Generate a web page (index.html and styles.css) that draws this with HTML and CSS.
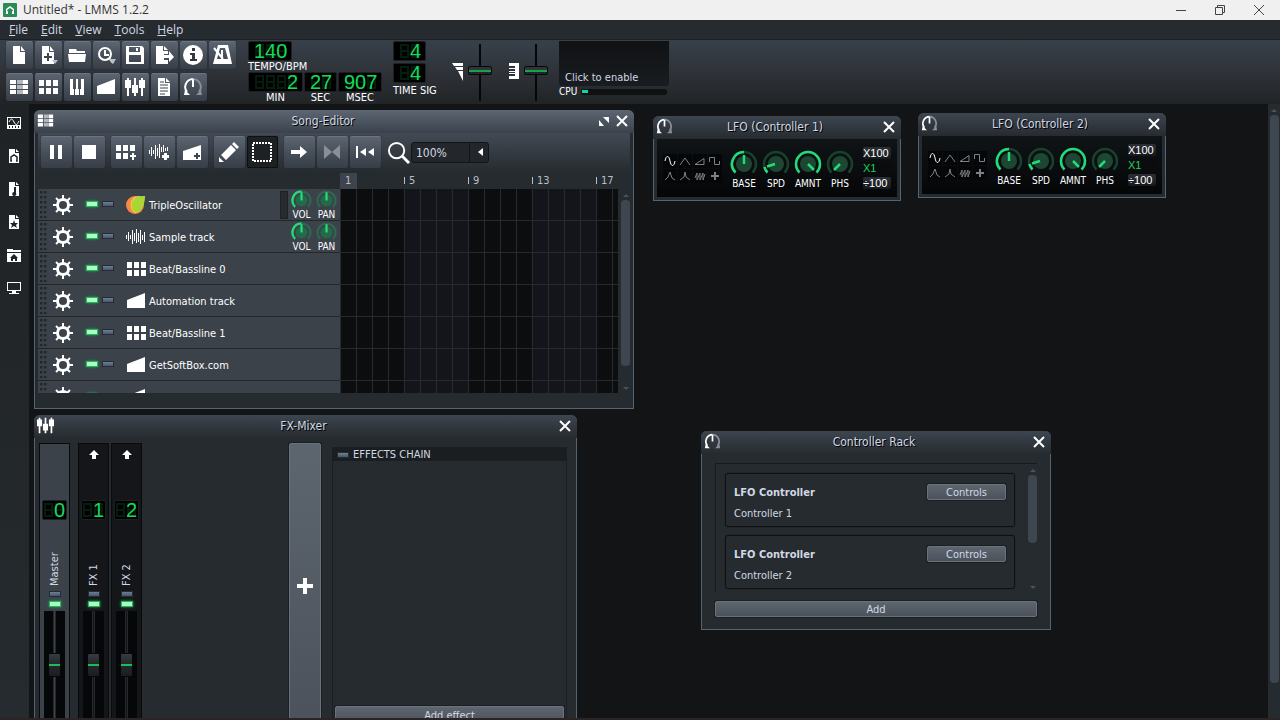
FILE: index.html
```html
<!DOCTYPE html>
<html lang="en">
<head>
<meta charset="utf-8">
<meta name="viewport" content="width=device-width, initial-scale=1">
<title>Untitled* - LMMS 1.2.2</title>
<link rel="stylesheet" href="styles.css">
</head>
<body>

<!-- icon set -->
<svg class="sprite" width="0" height="0">
  <symbol id="i-file" viewBox="0 0 20 20"><path d="M4 1h7v6h5v12H4zM12 1l4 5h-4z"/></symbol>
  <symbol id="i-new" viewBox="0 0 20 20"><path d="M4 1h7v6h5v12H4zM12 1l4 5h-4z"/><path d="M10 8v8M6 12h8" stroke="#3d444e" stroke-width="2"/><path d="M14 15h6l-3 4z" fill="#b8bfc8"/></symbol>
  <symbol id="i-open" viewBox="0 0 20 20"><path d="M2 4h7l1 2h8v2H2zM1 9h18l-1 8H2z"/></symbol>
  <symbol id="i-recent" viewBox="0 0 20 20"><circle cx="9" cy="9" r="6" fill="none" stroke="#fff" stroke-width="2"/><path d="M9 5v5h4M13 13l4 5" fill="none" stroke="#fff" stroke-width="2"/><path d="M13 14h7l-3 5z" fill="#b8bfc8"/></symbol>
  <symbol id="i-save" viewBox="0 0 20 20"><path fill-rule="evenodd" d="M1 1h16l2 2v16H1zM4 2v5h11V2zM4 10v7h12v-7z"/><path d="M11 3h2v3h-2z"/></symbol>
  <symbol id="i-export" viewBox="0 0 20 20"><path d="M2 1h7v5h5v3h-4v6h4v4H2zM10 1l4 4h-4z"/><path d="M9 10h6V6l5 6-5 5v-4H9z"/></symbol>
  <symbol id="i-info" viewBox="0 0 20 20"><circle cx="10" cy="10" r="10"/><path d="M9 3h3v3H9zM7 8h5v6h2v2H7v-2h2v-4H7z" fill="#333a43"/></symbol>
  <symbol id="i-metro" viewBox="0 0 20 20"><path fill-rule="evenodd" d="M6 0h10l4 19H1zM8 3L5 14h11L13 3z"/><path d="M2 3l9 11M10 5v9" stroke="#fff" stroke-width="2" fill="none"/></symbol>
  <symbol id="i-song" viewBox="0 0 20 20"><path d="M1 3h6v4H1zM14 3h5v4h-5zM1 8h6v4H1zM14 8h5v4h-5zM1 13h6v4H1zM14 13h5v4h-5z"/><path d="M8 3h6v4H8zM8 8h6v4H8zM8 13h6v4H8z" fill="#b3b6bd"/></symbol>
  <symbol id="i-bb" viewBox="0 0 20 20"><path d="M1 3h5v6H1zM8 3h5v6H8zM15 3h5v6h-5zM1 11h5v6H1zM8 11h5v6H8zM15 11h5v6h-5z"/></symbol>
  <symbol id="i-piano" viewBox="0 0 20 20"><path d="M3 2h3v10h1v6H3zM8 12h1V2h2v10h1v6H8zM14 2h3v16h-4v-6h1z"/></symbol>
  <symbol id="i-auto" viewBox="0 0 20 20"><path d="M1 9L19 2v15H1z"/></symbol>
  <symbol id="i-mixer" viewBox="0 0 20 20"><path d="M3 1v18M10 1v18M17 1v18" stroke="#fff" stroke-width="2"/><path d="M0 3h6v8H0zM7 8h6v8H7zM14 3h6v8h-6z"/></symbol>
  <symbol id="i-notes" viewBox="0 0 20 20"><path d="M4 1h7v5h5v13H4zM12 1l4 4h-4z"/><path d="M6 5h4M6 8h8M6 11h8M6 14h8M6 17h5" stroke="#3d444e"/></symbol>
  <symbol id="i-knob" viewBox="0 0 20 20"><path d="M10 2a8 8 0 0 0-6 13" fill="none" stroke="#fff" stroke-width="2"/><path d="M10 2a8 8 0 0 1 6 13" fill="none" stroke="#8a8f98" stroke-width="2"/><path d="M10 2v8" stroke="#fff" stroke-width="2"/><path d="M1 18l1-5 5 5z"/><path d="M19 18l-1-5-5 5z" fill="#8a8f98"/></symbol>
  <symbol id="i-gear" viewBox="0 0 20 20"><circle cx="10" cy="10" r="5.5" fill="none" stroke="#fff" stroke-width="3"/><path d="M10 0v4M10 16v4M0 10h4M16 10h4M3 3l3 3M14 14l3 3M17 3l-3 3M6 14l-3 3" stroke="#fff" stroke-width="2"/></symbol>
  <symbol id="i-wave" viewBox="0 0 20 20"><path d="M.5 8v4M2.500 5v9M4.500 8v4M6.500 3v14M8.500 6v8M10.500 2v14M12.500 6v9M14.500 3v14M16.500 8v5M18.500 5v10" stroke="#fff"/></symbol>
  <symbol id="i-close" viewBox="0 0 12 12"><path d="M1 1l10 10M11 1L1 11" stroke="#fff" stroke-width="2" fill="none"/></symbol>
  <symbol id="i-up" viewBox="0 0 12 12"><path d="M6 1l5 5H8v4H4V6H1z"/></symbol>
  <symbol id="i-slice" viewBox="0 0 20 20"><circle cx="9" cy="10" r="9" fill="#f58a45"/><path d="M14 1C3 0 2 14 9 18c5-1 8-8 5-17z" fill="#fbc94a"/><path d="M19 1C9 0 4 6 6 13c1 3 3 4 6 5 4-3 7-9 7-17z" fill="#a9d634"/></symbol>

  <!-- knob bodies -->
  <symbol id="k-body" viewBox="0 0 28 28"><circle cx="14" cy="14" r="8" fill="#1d4733"/><path d="M5.500 22.500A12 12 0 1 1 22.500 22.500" fill="none" stroke="#17432c" stroke-width="2.500"/></symbol>
  <symbol id="k-small" viewBox="0 0 28 28"><circle cx="14" cy="14" r="8" fill="#24694a"/><path d="M5.500 22.500A12 12 0 1 1 22.500 22.500" fill="none" stroke="#2c6950" stroke-width="3"/></symbol>
  <symbol id="k-vol" viewBox="0 0 28 28"><use href="#k-small"/><path d="M5.500 22.500A12 12 0 0 1 14 2" fill="none" stroke="#22dc78" stroke-width="3"/><path d="M14 3v11" stroke="#22dc78" stroke-width="3"/></symbol>
  <symbol id="k-pan" viewBox="0 0 28 28"><use href="#k-small"/><path d="M14 3v11" stroke="#22dc78" stroke-width="3"/></symbol>
  <symbol id="k-base" viewBox="0 0 28 28"><use href="#k-body"/><path d="M5.500 22.500A12 12 0 0 1 14 2M14 5v9" fill="none" stroke="#22dc78" stroke-width="2.500"/></symbol>
  <symbol id="k-spd" viewBox="0 0 28 28"><use href="#k-body"/><path d="M5.500 22.500A12 12 0 0 1 2.400 17M5 16.500L13 14" fill="none" stroke="#22dc78" stroke-width="2.500"/></symbol>
  <symbol id="k-amnt" viewBox="0 0 28 28"><use href="#k-body"/><path d="M5.500 22.500A12 12 0 1 1 22.500 22.500M14 14l6 6" fill="none" stroke="#22dc78" stroke-width="2.500"/></symbol>
  <symbol id="k-phs" viewBox="0 0 28 28"><use href="#k-body"/><path d="M14 14l-6 6" fill="none" stroke="#22dc78" stroke-width="2.500"/></symbol>

  <!-- lfo waveforms -->
  <symbol id="w-sin" viewBox="0 0 14 14"><path d="M2 7C3 1 6 1 7 7s4 6 5 0"/></symbol>
  <symbol id="w-tri" viewBox="0 0 14 14"><path d="M2 11l5-7 5 7"/></symbol>
  <symbol id="w-saw" viewBox="0 0 14 14"><path d="M2 10.500l9-6v6z"/></symbol>
  <symbol id="w-sqr" viewBox="0 0 14 14"><path d="M1.500 8V3.500h5v7h5V7"/></symbol>
  <symbol id="w-moog" viewBox="0 0 14 14"><path d="M2 11l3-3 2-5 2 6 3 2"/></symbol>
  <symbol id="w-exp" viewBox="0 0 14 14"><path d="M2 11l4-3 1-5 1 5 4 3"/></symbol>
  <symbol id="w-noise" viewBox="0 0 14 14"><path d="M2 9l2-5v7l3-7v7l3-7v7l2-6"/></symbol>
  <symbol id="w-user" viewBox="0 0 14 14"><path d="M7 3v8M3 7h8" stroke-width="2"/></symbol>
</svg>

<header class="titlebar">
  <svg class="logo" viewBox="0 0 14 14"><rect width="14" height="14" rx="1" fill="#2b8a57"/><path d="M3 11V6l4-3 4 3v5H9V9l1-2-3-2-3 2 1 2v2z" fill="#fff"/></svg>
  <span class="titlebar-text">Untitled* - LMMS 1.2.2</span>
  <button class="sys" aria-label="Minimize"><svg viewBox="0 0 12 12"><path d="M1 6.500h10"/></svg></button>
  <button class="sys" aria-label="Restore"><svg viewBox="0 0 12 12"><path d="M1.500 3.500h7v7h-7zM3.500 3V1.500h7v7H9"/></svg></button>
  <button class="sys" aria-label="Close"><svg viewBox="0 0 12 12"><path d="M1 1l10 10M11 1L1 11"/></svg></button>
</header>

<nav class="menu">
  <a href="#"><u>F</u>ile</a>
  <a href="#"><u>E</u>dit</a>
  <a href="#"><u>V</u>iew</a>
  <a href="#"><u>T</u>ools</a>
  <a href="#"><u>H</u>elp</a>
</nav>

<div class="toolbar">
  <div class="tool-grid">
    <button class="tool" aria-label="New project"><svg><use href="#i-file"/></svg></button>
    <button class="tool" aria-label="New from template"><svg><use href="#i-new"/></svg></button>
    <button class="tool" aria-label="Open"><svg><use href="#i-open"/></svg></button>
    <button class="tool" aria-label="Recent projects"><svg><use href="#i-recent"/></svg></button>
    <button class="tool" aria-label="Save"><svg><use href="#i-save"/></svg></button>
    <button class="tool" aria-label="Export"><svg><use href="#i-export"/></svg></button>
    <button class="tool" aria-label="Info"><svg><use href="#i-info"/></svg></button>
    <button class="tool" aria-label="Metronome"><svg><use href="#i-metro"/></svg></button>
    <button class="tool" aria-label="Song-Editor"><svg><use href="#i-song"/></svg></button>
    <button class="tool" aria-label="Beat+Bassline Editor"><svg><use href="#i-bb"/></svg></button>
    <button class="tool" aria-label="Piano Roll"><svg><use href="#i-piano"/></svg></button>
    <button class="tool" aria-label="Automation Editor"><svg><use href="#i-auto"/></svg></button>
    <button class="tool" aria-label="FX-Mixer"><svg><use href="#i-mixer"/></svg></button>
    <button class="tool" aria-label="Project notes"><svg><use href="#i-notes"/></svg></button>
    <button class="tool" aria-label="Controller Rack"><svg><use href="#i-knob"/></svg></button>
  </div>

  <div class="clock">
    <div class="tempo"><span class="lcd lcd3">140</span><span class="cap">TEMPO/BPM</span></div>
    <div class="times">
      <div><span class="lcd lcd4">2</span><span class="cap mid">MIN</span></div>
      <div><span class="lcd lcd2">27</span><span class="cap mid">SEC</span></div>
      <div><span class="lcd lcd3">907</span><span class="cap mid">MSEC</span></div>
    </div>
  </div>

  <div class="timesig">
    <span class="lcd lcd2">4</span>
    <span class="lcd lcd2">4</span>
    <span class="cap">TIME SIG</span>
  </div>

  <div class="master">
    <svg width="12" height="18" viewBox="0 0 12 18"><path d="M0 0h11v3H2zM3 4h8v3H5zM6 8h5v10z"/></svg>
    <input class="vfader" type="range" min="0" max="100" value="54" aria-label="Master volume">
    <svg width="12" height="18" viewBox="0 0 12 18"><path d="M1 0h10v3H1zM7 3h4v10H7zM1 5h6v1H1zM1 8h6v1H1zM1 10h6v1H1zM1 13h10v3H1z"/></svg>
    <input class="vfader" type="range" min="0" max="100" value="54" aria-label="Master pitch">
  </div>

  <div class="cpu">
    <button class="scope">Click to enable</button>
    <div class="cpu-row"><span>CPU</span><div class="cpu-bar"><i></i></div></div>
  </div>
</div>

<div class="main">
  <aside class="sidebar">
    <button aria-label="Instrument plugins"><svg viewBox="0 0 14 14"><path fill-rule="evenodd" d="M0 1h14v12H0zM1 2v7h12V2zM2 10v2h1v-2zM5 10v2h1v-2zM8 10v2h1v-2zM11 10v2h1v-2z"/><path d="M2 6c2-4 3-4 5 0s3 3 5-1" fill="none" stroke="#fff"/></svg></button>
    <button aria-label="My projects"><svg viewBox="0 0 14 14"><path d="M2 0h6v4h4v10H2zM9 0l3 3H9z"/><path d="M5 12H4V8l3-2 3 2v4H9" fill="none" stroke="#1f2427" stroke-width="1.500"/></svg></button>
    <button aria-label="My samples"><svg viewBox="0 0 14 14"><path d="M2 0h6v4h4v10H2zM9 0l3 3H9z"/><path d="M7 5h2v6a2 2 0 1 1-2-1z" fill="#1f2427"/></svg></button>
    <button aria-label="My presets"><svg viewBox="0 0 14 14"><path d="M2 0h6v4h4v10H2zM9 0l3 3H9z"/><path d="M7 5l1 3h3l-2 2 1 3-3-2-3 2 1-3-2-2h3z" fill="#1f2427"/></svg></button>
    <button aria-label="My home"><svg viewBox="0 0 14 14"><path d="M0 1h6v1h8v2H0zM0 5h14v9H0z"/><path d="M7 6l4 4h-1v3H8v-2H6v2H4v-3H3z" fill="#1f2427"/></svg></button>
    <button aria-label="My computer"><svg viewBox="0 0 14 14"><path fill-rule="evenodd" d="M0 1h14v9H0zM1 2v7h12V2zM5 10h4v2H5zM2 12h10v1H2z"/></svg></button>
  </aside>

  <main class="workspace">

    <section class="win song active">
      <div class="win-title">
        <svg class="win-icon"><use href="#i-song"/></svg>
        <h2>Song-Editor</h2>
        <button aria-label="Maximize"><svg viewBox="0 0 12 12"><path d="M5 2h6v6zM1 5l5 6H1z"/></svg></button>
        <button aria-label="Close"><svg><use href="#i-close"/></svg></button>
      </div>
      <div class="song-tools">
        <div class="group">
          <button class="tool" aria-label="Pause"><svg viewBox="0 0 20 20"><path d="M4 3h4v14H4zM12 3h4v14h-4z"/></svg></button>
          <button class="tool" aria-label="Stop"><svg viewBox="0 0 20 20"><path d="M3 3h14v14H3z"/></svg></button>
        </div>
        <div class="group">
          <button class="tool" aria-label="Add beat/bassline"><svg viewBox="0 0 20 20"><path d="M0 3h5v6H0zM7 3h5v6H7zM14 3h5v6h-5zM0 11h5v6H0zM7 11h5v6H7zM16 11h2v2h2v2h-2v3h-2v-3h-2v-2h2z"/></svg></button>
          <button class="tool" aria-label="Add sample track"><svg viewBox="0 0 20 20"><path d="M.5 8v4M2.500 5v9M4.500 8v4M6.500 3v14M8.500 6v8M10.500 2v14M12.500 5v5M14.500 3v7M16.500 6v3M18.500 5v4" stroke="#fff"/><path d="M15 11h3v2h2v3h-2v2h-3v-2h-2v-3h2z"/></svg></button>
          <button class="tool" aria-label="Add automation track"><svg viewBox="0 0 20 20"><path d="M1 9L19 3v15H1z"/><path d="M15 11v6M12 14h6" stroke="#3d444e" stroke-width="2"/></svg></button>
        </div>
        <div class="group">
          <button class="tool" aria-label="Draw mode"><svg viewBox="0 0 20 20"><path d="M2 13L12 3l5 5L7 18zM13 2l2-2 5 5-2 2zM0 15l5 5H0z"/></svg></button>
          <button class="tool pressed" aria-label="Edit mode"><svg viewBox="0 0 20 20"><path d="M1 1h18v18H1z" fill="none" stroke="#fff" stroke-width="2" stroke-dasharray="2 1"/></svg></button>
        </div>
        <div class="group">
          <button class="tool" aria-label="Autoscroll"><svg viewBox="0 0 20 20"><path d="M2 8h9V4l7 6-7 6v-4H2z"/></svg></button>
          <button class="tool" aria-label="Loop points"><svg viewBox="0 0 20 20"><path d="M2 3l8 7-8 7zM18 3l-8 7 8 7z" fill="#8b9098"/></svg></button>
          <button class="tool" aria-label="Back to start"><svg viewBox="0 0 20 20"><path d="M1 4h2v12H1zM11 6v8l-6-4zM19 6v8l-6-4z"/></svg></button>
        </div>
        <label class="zoom">
          <svg viewBox="0 0 24 24"><circle cx="10" cy="10" r="8" fill="none" stroke="#fff" stroke-width="2"/><path d="M16 16l7 7" stroke="#fff" stroke-width="3"/></svg>
          <span class="combo"><select aria-label="Zoom"><option>100%</option></select></span>
        </label>
      </div>
      <div class="timeline"><span class="pos">1</span><span>5</span><span>9</span><span>13</span><span>17</span></div>
      <div class="song-body">
        <div class="tracks">
          <div class="track">
            <div class="head"><i class="grip"></i><button class="gear" aria-label="Track menu"><svg><use href="#i-gear"/></svg></button><input type="checkbox" class="led" checked aria-label="Mute"><input type="checkbox" class="led" aria-label="Solo"><svg class="kind"><use href="#i-slice"/></svg><span class="name">TripleOscillator</span><i class="activity"></i><div class="mini"><svg><use href="#k-vol"/></svg>VOL</div><div class="mini"><svg><use href="#k-pan"/></svg>PAN</div></div>
            <div class="bars"></div>
          </div>
          <div class="track">
            <div class="head"><i class="grip"></i><button class="gear" aria-label="Track menu"><svg><use href="#i-gear"/></svg></button><input type="checkbox" class="led" checked aria-label="Mute"><input type="checkbox" class="led" aria-label="Solo"><svg class="kind"><use href="#i-wave"/></svg><span class="name">Sample track</span><div class="mini"><svg><use href="#k-vol"/></svg>VOL</div><div class="mini"><svg><use href="#k-pan"/></svg>PAN</div></div>
            <div class="bars"></div>
          </div>
          <div class="track">
            <div class="head"><i class="grip"></i><button class="gear" aria-label="Track menu"><svg><use href="#i-gear"/></svg></button><input type="checkbox" class="led" checked aria-label="Mute"><input type="checkbox" class="led" aria-label="Solo"><svg class="kind"><use href="#i-bb"/></svg><span class="name">Beat/Bassline 0</span></div>
            <div class="bars"></div>
          </div>
          <div class="track">
            <div class="head"><i class="grip"></i><button class="gear" aria-label="Track menu"><svg><use href="#i-gear"/></svg></button><input type="checkbox" class="led" checked aria-label="Mute"><input type="checkbox" class="led" aria-label="Solo"><svg class="kind"><use href="#i-auto"/></svg><span class="name">Automation track</span></div>
            <div class="bars"></div>
          </div>
          <div class="track">
            <div class="head"><i class="grip"></i><button class="gear" aria-label="Track menu"><svg><use href="#i-gear"/></svg></button><input type="checkbox" class="led" checked aria-label="Mute"><input type="checkbox" class="led" aria-label="Solo"><svg class="kind"><use href="#i-bb"/></svg><span class="name">Beat/Bassline 1</span></div>
            <div class="bars"></div>
          </div>
          <div class="track">
            <div class="head"><i class="grip"></i><button class="gear" aria-label="Track menu"><svg><use href="#i-gear"/></svg></button><input type="checkbox" class="led" checked aria-label="Mute"><input type="checkbox" class="led" aria-label="Solo"><svg class="kind"><use href="#i-auto"/></svg><span class="name">GetSoftBox.com</span></div>
            <div class="bars"></div>
          </div>
          <div class="track">
            <div class="head"><i class="grip"></i><button class="gear" aria-label="Track menu"><svg><use href="#i-gear"/></svg></button><input type="checkbox" class="led" checked aria-label="Mute"><input type="checkbox" class="led" aria-label="Solo"><svg class="kind"><use href="#i-auto"/></svg><span class="name">Automation track</span></div>
            <div class="bars"></div>
          </div>
        </div>
        <div class="scroll"><b class="arr-up"></b><i></i><b class="arr-down"></b></div>
      </div>
    </section>

    <section class="win mixer">
      <div class="win-title">
        <svg class="win-icon"><use href="#i-mixer"/></svg>
        <h2>FX-Mixer</h2>
        <button aria-label="Close"><svg><use href="#i-close"/></svg></button>
      </div>
      <div class="mixer-body">
        <div class="channels">
          <div class="channel selected">
            <div class="send"></div>
            <span class="lcd lcd2">0</span>
            <span class="ch-name">Master</span>
            <input type="checkbox" class="led" aria-label="Solo master">
            <input type="checkbox" class="led" checked aria-label="Mute master">
            <div class="meter"><input class="chfader" type="range" min="0" max="100" value="50" aria-label="Master level"></div>
          </div>
          <div class="channel">
            <div class="send"><svg><use href="#i-up"/></svg></div>
            <span class="lcd lcd2">1</span>
            <span class="ch-name">FX 1</span>
            <input type="checkbox" class="led" aria-label="Solo FX 1">
            <input type="checkbox" class="led" checked aria-label="Mute FX 1">
            <div class="meter"><input class="chfader" type="range" min="0" max="100" value="50" aria-label="FX 1 level"></div>
          </div>
          <div class="channel">
            <div class="send"><svg><use href="#i-up"/></svg></div>
            <span class="lcd lcd2">2</span>
            <span class="ch-name">FX 2</span>
            <input type="checkbox" class="led" aria-label="Solo FX 2">
            <input type="checkbox" class="led" checked aria-label="Mute FX 2">
            <div class="meter"><input class="chfader" type="range" min="0" max="100" value="50" aria-label="FX 2 level"></div>
          </div>
        </div>
        <button class="btn add-channel" aria-label="Add channel"><svg viewBox="0 0 16 16"><path d="M6 0h4v6h6v4h-6v6H6v-6H0V6h6z"/></svg></button>
        <div class="effects">
          <label class="effects-head"><input type="checkbox" class="led">EFFECTS CHAIN</label>
          <button class="btn">Add effect</button>
        </div>
      </div>
    </section>

    <section class="win lfo lfo1">
      <div class="win-title">
        <svg class="win-icon"><use href="#i-knob"/></svg>
        <h2>LFO (Controller 1)</h2>
        <button aria-label="Close"><svg><use href="#i-close"/></svg></button>
      </div>
      <div class="lfo-body">
        <div class="shapes">
          <button class="on" aria-label="Sine"><svg><use href="#w-sin"/></svg></button>
          <button aria-label="Triangle"><svg><use href="#w-tri"/></svg></button>
          <button aria-label="Saw"><svg><use href="#w-saw"/></svg></button>
          <button aria-label="Square"><svg><use href="#w-sqr"/></svg></button>
          <button aria-label="Moog saw"><svg><use href="#w-moog"/></svg></button>
          <button aria-label="Exponential"><svg><use href="#w-exp"/></svg></button>
          <button aria-label="Noise"><svg><use href="#w-noise"/></svg></button>
          <button aria-label="User defined"><svg><use href="#w-user"/></svg></button>
        </div>
        <div class="knobs">
          <div><svg><use href="#k-base"/></svg>BASE</div>
          <div><svg><use href="#k-spd"/></svg>SPD</div>
          <div><svg><use href="#k-amnt"/></svg>AMNT</div>
          <div><svg><use href="#k-phs"/></svg>PHS</div>
        </div>
        <div class="mult"><button>X100</button><button class="on">X1</button><button>÷100</button></div>
      </div>
    </section>

    <section class="win lfo lfo2">
      <div class="win-title">
        <svg class="win-icon"><use href="#i-knob"/></svg>
        <h2>LFO (Controller 2)</h2>
        <button aria-label="Close"><svg><use href="#i-close"/></svg></button>
      </div>
      <div class="lfo-body">
        <div class="shapes">
          <button class="on" aria-label="Sine"><svg><use href="#w-sin"/></svg></button>
          <button aria-label="Triangle"><svg><use href="#w-tri"/></svg></button>
          <button aria-label="Saw"><svg><use href="#w-saw"/></svg></button>
          <button aria-label="Square"><svg><use href="#w-sqr"/></svg></button>
          <button aria-label="Moog saw"><svg><use href="#w-moog"/></svg></button>
          <button aria-label="Exponential"><svg><use href="#w-exp"/></svg></button>
          <button aria-label="Noise"><svg><use href="#w-noise"/></svg></button>
          <button aria-label="User defined"><svg><use href="#w-user"/></svg></button>
        </div>
        <div class="knobs">
          <div><svg><use href="#k-base"/></svg>BASE</div>
          <div><svg><use href="#k-spd"/></svg>SPD</div>
          <div><svg><use href="#k-amnt"/></svg>AMNT</div>
          <div><svg><use href="#k-phs"/></svg>PHS</div>
        </div>
        <div class="mult"><button>X100</button><button class="on">X1</button><button>÷100</button></div>
      </div>
    </section>

    <section class="win rack">
      <div class="win-title">
        <svg class="win-icon"><use href="#i-knob"/></svg>
        <h2>Controller Rack</h2>
        <button aria-label="Close"><svg><use href="#i-close"/></svg></button>
      </div>
      <div class="rack-body">
        <div class="rack-list">
          <div class="cards">
            <div class="card"><div><h3>LFO Controller</h3><p>Controller 1</p></div><button class="btn">Controls</button></div>
            <div class="card"><div><h3>LFO Controller</h3><p>Controller 2</p></div><button class="btn">Controls</button></div>
          </div>
          <div class="scroll"><b class="arr-up"></b><i></i><b class="arr-down"></b></div>
        </div>
        <button class="btn">Add</button>
      </div>
    </section>

  </main>
  <div class="scroll page-scroll"><b class="arr-up"></b><i></i></div>
</div>
<div class="taskbar-edge"></div>

</body>
</html>
```
FILE: styles.css
```css
*, *:before, *:after {
  box-sizing: border-box;
}

body {
  margin: 0;
  height: 100vh;
  display: flex;
  flex-direction: column;
  overflow: hidden;
  background: #121416;
  color: #d1d8e4;
  font-family: "DejaVu Sans Condensed", "DejaVu Sans", sans-serif;
  font-size: 11px;
  line-height: 14px;
}

button {
  padding: 0;
  border: 0;
  background: none;
  color: inherit;
  font: inherit;
  cursor: pointer;
}

h2, h3, p {
  margin: 0;
}

svg {
  display: block;
  flex: none;
  fill: #fff;
}

.sprite {
  position: absolute;
}

/* window chrome */

.titlebar {
  flex: none;
  display: flex;
  align-items: center;
  height: 20px;
  padding: 0 2px 0 3px;
  background: #f0f0f0;
  color: #333;
  font-family: "Open Sans", "Noto Sans", sans-serif;
  font-size: 12px;
}

.logo {
  width: 14px;
  height: 14px;
}

.titlebar-text {
  flex: 1;
  padding-left: 6px;
}

.sys {
  width: 39px;
  display: flex;
  justify-content: center;
}

.sys svg {
  width: 12px;
  height: 12px;
  fill: none;
  stroke: #444;
}

.menu {
  flex: none;
  display: flex;
  gap: 13px;
  height: 20px;
  padding-left: 9px;
  background: #262b2f;
  border-bottom: 1px solid #1d2124;
  font-family: "Open Sans", "Noto Sans", sans-serif;
  font-size: 12px;
  line-height: 20px;
}

.menu a {
  color: #d1d8e4;
  text-decoration: none;
}

/* main toolbar */

.toolbar {
  flex: none;
  display: flex;
  height: 64px;
  padding: 1px 6px 0;
  background: linear-gradient(#37404a, #2f3339 50%, #202426);
}

.tool-grid {
  display: grid;
  grid-template-columns: repeat(8, 27px);
  grid-auto-rows: 28px;
  gap: 4px 2px;
  width: 242px;
}

.tool {
  display: flex;
  align-items: center;
  justify-content: center;
  padding: 0 1px 1px 0;
  border-radius: 2px;
  background: linear-gradient(#5b6470, #474f5a 50%, #373e47);
  border-top: 1px solid #6b7480;
  box-shadow: 0 0 1px #14171a;
}

.tool svg {
  width: 20px;
  height: 20px;
}

.tool.pressed {
  background: #1d2124;
  border: 1px solid #0d0f10;
}

/* the unlit segments behind the digits repeat every 11px */
.lcd {
  --off: #041d0e;
  --bar: linear-gradient(90deg, transparent 1px, var(--off) 1px 10px, transparent 10px);
  display: block;
  height: 20px;
  padding: 0 4px 0 5px;
  border: 1px solid #1d2125;
  border-radius: 2px;
  background:
    var(--bar) right 2px / 11px 2px repeat-x content-box,
    var(--bar) right 8px / 11px 2px repeat-x content-box,
    var(--bar) right 14px / 11px 2px repeat-x content-box,
    linear-gradient(90deg, transparent 1px, var(--off) 1px 3px, transparent 3px 8px, var(--off) 8px 10px, transparent 10px) right 2px / 11px 14px repeat-x content-box,
    #000;
  color: #12dc5a;
  font-family: "Liberation Sans", Arial, sans-serif;
  font-size: 20px;
  line-height: 19px;
  text-align: right;
}

.lcd2 { width: 33px; }
.lcd3 { width: 44px; }
.lcd4 { width: 55px; }

.cap {
  display: block;
  color: #fff;
  line-height: 11px;
}

.mid {
  text-align: center;
}

.clock {
  width: 145px;
}

.times {
  display: flex;
  gap: 1px;
}

.timesig {
  display: flex;
  flex-direction: column;
  gap: 2px;
  width: 59px;
}

.master {
  display: flex;
  align-items: flex-start;
  gap: 4px;
  padding-top: 3px;
  width: 107px;
}

.master svg {
  margin-top: 19px;
}

.vfader {
  appearance: none;
  writing-mode: vertical-lr;
  direction: rtl;
  width: 24px;
  height: 57px;
  margin: 0 12px 0 0;
  background: linear-gradient(#050607, #050607) center / 2px 100% no-repeat;
}

.vfader::-webkit-slider-thumb {
  appearance: none;
  width: 24px;
  height: 9px;
  border: 1px solid #060708;
  border-radius: 2px;
  background: linear-gradient(#30353b 3px, #16a34a 3px, #16a34a 5px, #22262a 5px);
}

.cpu {
  width: 110px;
}

.scope {
  display: block;
  width: 100%;
  height: 45px;
  padding: 29px 0 0 6px;
  border-radius: 0 0 3px 3px;
  background: linear-gradient(#101214, #191c20);
  text-align: left;
}

.cpu-row {
  display: flex;
  align-items: center;
  gap: 4px;
  padding-right: 2px;
  color: #fff;
  font-size: 10px;
  line-height: 11px;
}

.cpu-bar {
  flex: 1;
  height: 6px;
  padding: 1px;
  border-radius: 2px;
  background: #0f1113;
}

.cpu-bar i {
  display: block;
  width: 6px;
  height: 3px;
  background: #0fd5a5;
}

/* body */

.main {
  flex: 1;
  display: flex;
  min-height: 0;
}

.sidebar {
  width: 29px;
  display: flex;
  flex-direction: column;
  align-items: center;
  gap: 19px;
  padding: 12px 1px 0 0;
  background: linear-gradient(#1f2325, #262b2f);
}

.sidebar svg {
  width: 14px;
  height: 14px;
}

.workspace {
  flex: 1;
  position: relative;
  overflow: hidden;
}

.taskbar-edge {
  flex: none;
  height: 2px;
  background: #2b2424;
}

/* sub windows */

.win {
  position: absolute;
  display: flex;
  flex-direction: column;
  border: 1px solid #566373;
  border-top: 0;
  border-radius: 6px 6px 0 0;
  background: #262b2f;
}

.win-title {
  flex: none;
  display: flex;
  align-items: center;
  gap: 6px;
  height: 23px;
  margin: 0 -1px;
  padding: 0 6px 2px 3px;
  border-radius: 6px 6px 0 0;
  background: linear-gradient(#3d4550, #262b2f);
}

.active .win-title {
  background: linear-gradient(#5c6672, #3b424c);
}

.win-title h2 {
  flex: 1;
  padding-right: 6px;
  font-size: 12px;
  font-weight: normal;
  text-align: center;
  text-shadow: 1px 1px 0 #000;
}

.win-icon {
  width: 17px;
  height: 17px;
}

.win-title button svg {
  width: 12px;
  height: 12px;
}

.btn {
  border: 1px solid #6b727b;
  border-radius: 2px;
  background: linear-gradient(#5d656f, #4b525b);
  box-shadow: 0 0 0 1px #1b1f22;
  color: #d1d8e4;
  line-height: 13px;
}

.scroll {
  flex: none;
  display: flex;
  flex-direction: column;
  align-items: center;
  gap: 3px;
  width: 13px;
  padding: 5px 0 3px;
}

.scroll i {
  flex: 1;
  width: 9px;
  border-radius: 4px;
  background: #3e4650;
}

.arr-up, .arr-down {
  border: 3px solid transparent;
}

.arr-up {
  border-top: 0;
  border-bottom-color: #4b525a;
}

.arr-down {
  border-bottom: 0;
  border-top-color: #4b525a;
}

.page-scroll {
  width: 12px;
  background: #262b2f;
}

.page-scroll i {
  margin-bottom: 32px;
}

/* song editor */

.song {
  left: 5px;
  top: 6px;
  width: 600px;
  padding-bottom: 15px;
}

.song-tools {
  display: flex;
  gap: 6px;
  height: 39px;
  margin: 0 3px;
  padding: 3px;
  background: linear-gradient(#434a55, #262b2f);
}

.group {
  display: flex;
  gap: 2px;
}

.group .tool {
  width: 31px;
  height: 32px;
}

.zoom {
  display: flex;
  align-items: center;
  gap: 1px;
}

.zoom svg {
  width: 23px;
  height: 23px;
}

.combo {
  position: relative;
}

.combo select {
  appearance: none;
  width: 78px;
  height: 21px;
  padding: 0 4px;
  border: 1px solid #121517;
  border-radius: 3px;
  background: linear-gradient(#121517, #121517) 57px 0 / 1px 100% no-repeat, #23272b;
  color: #d1d8e4;
  font: inherit;
  font-size: 12px;
}

.combo:after {
  content: "";
  position: absolute;
  right: 6px;
  top: 6px;
  border: 4px solid transparent;
  border-left: 0;
  border-right: 5px solid #fff;
}

.timeline {
  display: flex;
  height: 17px;
  padding: 1px 0 0 305px;
  line-height: 16px;
  color: #b8bec8;
}

.timeline span {
  width: 64px;
  padding-left: 5px;
  background: linear-gradient(#b8bec8, #b8bec8) 0 4px / 1px 7px no-repeat;
}

.timeline span:last-child {
  width: 20px;
}

.timeline .pos {
  width: 17px;
  margin-right: 47px;
  background: #3d444e;
}

.song-body {
  display: flex;
  height: 204px;
  margin-left: 3px;
}

.tracks {
  flex: 1;
  overflow: hidden;
}

.song-body .scroll {
  margin: 0 1px 0 1px;
}

.song-body .scroll i {
  margin-bottom: 18px;
}

.track {
  display: flex;
  height: 32px;
}

.head {
  width: 302px;
  display: flex;
  align-items: center;
  padding: 0 1px 0 2px;
  background: #3b424a;
  border-bottom: 1px solid #22272a;
  color: #fff;
}

.grip {
  width: 8px;
  height: 27px;
  margin-right: 5px;
  background: radial-gradient(circle at 1px 1px, #22272a 1px, transparent 2px) 0 0 / 4px 5px;
}

.gear svg, .kind {
  width: 20px;
  height: 20px;
}

.gear {
  margin-right: 13px;
}

.led {
  appearance: none;
  width: 12px;
  height: 6px;
  margin: 0;
  border: 1px solid #262c33;
  background: linear-gradient(#6b7f96, #46566a);
}

.led:checked {
  border-color: #2fae60;
  background: #a5ffc0;
  box-shadow: 0 0 3px #1fae55;
}

.head .led {
  margin: 0 4px 2px 0;
}

.kind {
  margin: 0 3px 0 8px;
}

.name {
  flex: 1;
  padding-top: 2px;
}

.activity {
  width: 8px;
  height: 28px;
  margin-right: 1px;
  background: #262b2f;
  border: 1px solid #1e2225;
}

.mini {
  width: 25px;
  display: flex;
  flex-direction: column;
  align-items: center;
  padding-bottom: 1px;
  font-size: 10px;
  line-height: 8px;
}

.mini svg {
  width: 21px;
  height: 21px;
}

.bars {
  flex: 1;
  border-bottom: 1px solid #262b2f;
  background:
    repeating-linear-gradient(90deg, #262b2f 0 1px, transparent 1px 16px),
    repeating-linear-gradient(90deg, #0b0d0e 0 64px, #13151a 64px 128px);
}

/* fx mixer */

.mixer {
  left: 5px;
  top: 311px;
  width: 543px;
}

.mixer-body {
  display: flex;
  height: 300px;
  padding: 5px 9px 10px 4px;
}

.channels {
  flex: 1;
  display: flex;
  gap: 2px;
}

.channel {
  width: 31px;
  display: flex;
  flex-direction: column;
  align-items: center;
  border: 1px solid #090a0b;
  background: #14161a;
}

.channel.selected {
  margin-right: 6px;
  background: #3b424a;
}

.send {
  height: 56px;
  padding-top: 5px;
}

.send svg {
  width: 12px;
  height: 12px;
}

.channel .lcd {
  width: 25px;
  padding: 0 1px 0 0;
}

.ch-name {
  height: 66px;
  margin-bottom: 5px;
  writing-mode: vertical-rl;
  transform: rotate(180deg);
}

.channel .led {
  margin-bottom: 4px;
}

.meter {
  flex: 1;
  display: flex;
  width: 21px;
  background: linear-gradient(90deg, #060708 9px, #24282c 9px 10px, transparent 10px 11px, #24282c 11px 12px, #060708 12px);
}

.chfader {
  appearance: none;
  writing-mode: vertical-lr;
  direction: rtl;
  width: 21px;
  height: 108px;
  margin: 0;
  background: none;
}

.chfader::-webkit-slider-thumb {
  appearance: none;
  width: 13px;
  height: 24px;
  margin: 0 4px;
  border: 1px solid #060708;
  border-radius: 2px;
  background: linear-gradient(#363c43, #24282d 10px, #16c055 10px, #16c055 12px, #24282d 12px, #1a1d20);
}

.add-channel {
  display: flex;
  align-items: center;
  justify-content: center;
  width: 32px;
  margin-right: 11px;
}

.add-channel svg {
  width: 16px;
  height: 16px;
}

.effects {
  width: 235px;
  display: flex;
  flex-direction: column;
  justify-content: space-between;
  margin: 4px 0 3px;
  border: 1px solid #1b1f21;
}

.effects-head {
  display: flex;
  align-items: center;
  gap: 4px;
  padding-left: 4px;
  height: 13px;
  background: #1a1e20;
}

.effects .btn {
  height: 18px;
  margin: 0 2px;
}

/* lfo controllers */

.lfo {
  width: 248px;
  padding: 0 3px 3px;
}

.lfo1 {
  left: 624px;
  top: 12px;
}

.lfo2 {
  left: 889px;
  top: 9px;
}

.lfo .win-title {
  margin: 0 -4px;
}

.lfo-body {
  display: flex;
  height: 58px;
  padding: 8px 6px 0 6px;
  background: linear-gradient(#101417, #050608);
  color: #fff;
}

.shapes {
  display: grid;
  grid-template-columns: repeat(4, 14px);
  grid-auto-rows: 14px;
  align-content: start;
  gap: 1px;
  margin: 7px 6px 0 0;
}

.shapes button {
  background: #050607;
}

.shapes svg {
  width: 14px;
  height: 14px;
  fill: none;
  stroke: #7d8085;
}

.shapes .on svg {
  stroke: #fff;
}

.knobs {
  flex: 1;
  display: flex;
  margin-top: 3px;
}

.knobs div {
  width: 32px;
  display: flex;
  flex-direction: column;
  align-items: center;
  font-size: 10px;
  line-height: 12px;
}

.knobs svg {
  width: 28px;
  height: 28px;
}

.mult {
  display: flex;
  flex-direction: column;
  gap: 3px;
}

.mult button {
  width: 28px;
  height: 12px;
  border-radius: 2px;
  background: linear-gradient(#2b3035, #16191c);
  color: #fff;
  font-family: "Liberation Sans", Arial, sans-serif;
  font-size: 11px;
  line-height: 12px;
  text-align: left;
}

.mult .on {
  background: #0a0c0d;
  color: #1fd05f;
}

/* controller rack */

.rack {
  left: 672px;
  top: 327px;
  width: 350px;
}

.rack-body {
  display: flex;
  flex-direction: column;
  gap: 9px;
  padding: 9px 13px 12px;
}

.rack-list {
  display: flex;
  justify-content: space-between;
  height: 129px;
  border: 1px solid #171a1c;
  border-width: 1px 0 0 1px;
}

.rack-list .scroll {
  width: 9px;
}

.rack-list .scroll i {
  flex: none;
  height: 68px;
  margin-bottom: auto;
}

.cards {
  width: 299px;
  padding: 9px 0 0 9px;
}

.card {
  display: flex;
  justify-content: space-between;
  height: 54px;
  margin-bottom: 8px;
  padding: 10px 8px;
  border: 1px solid #0e1011;
  border-radius: 3px;
  box-shadow: 0 0 1px #0e1011;
}

.card h3 {
  padding-top: 2px;
  font-size: 11px;
  margin-bottom: 7px;
}

.card .btn {
  width: 79px;
  height: 16px;
}

.rack-body > .btn {
  height: 16px;
}
```
